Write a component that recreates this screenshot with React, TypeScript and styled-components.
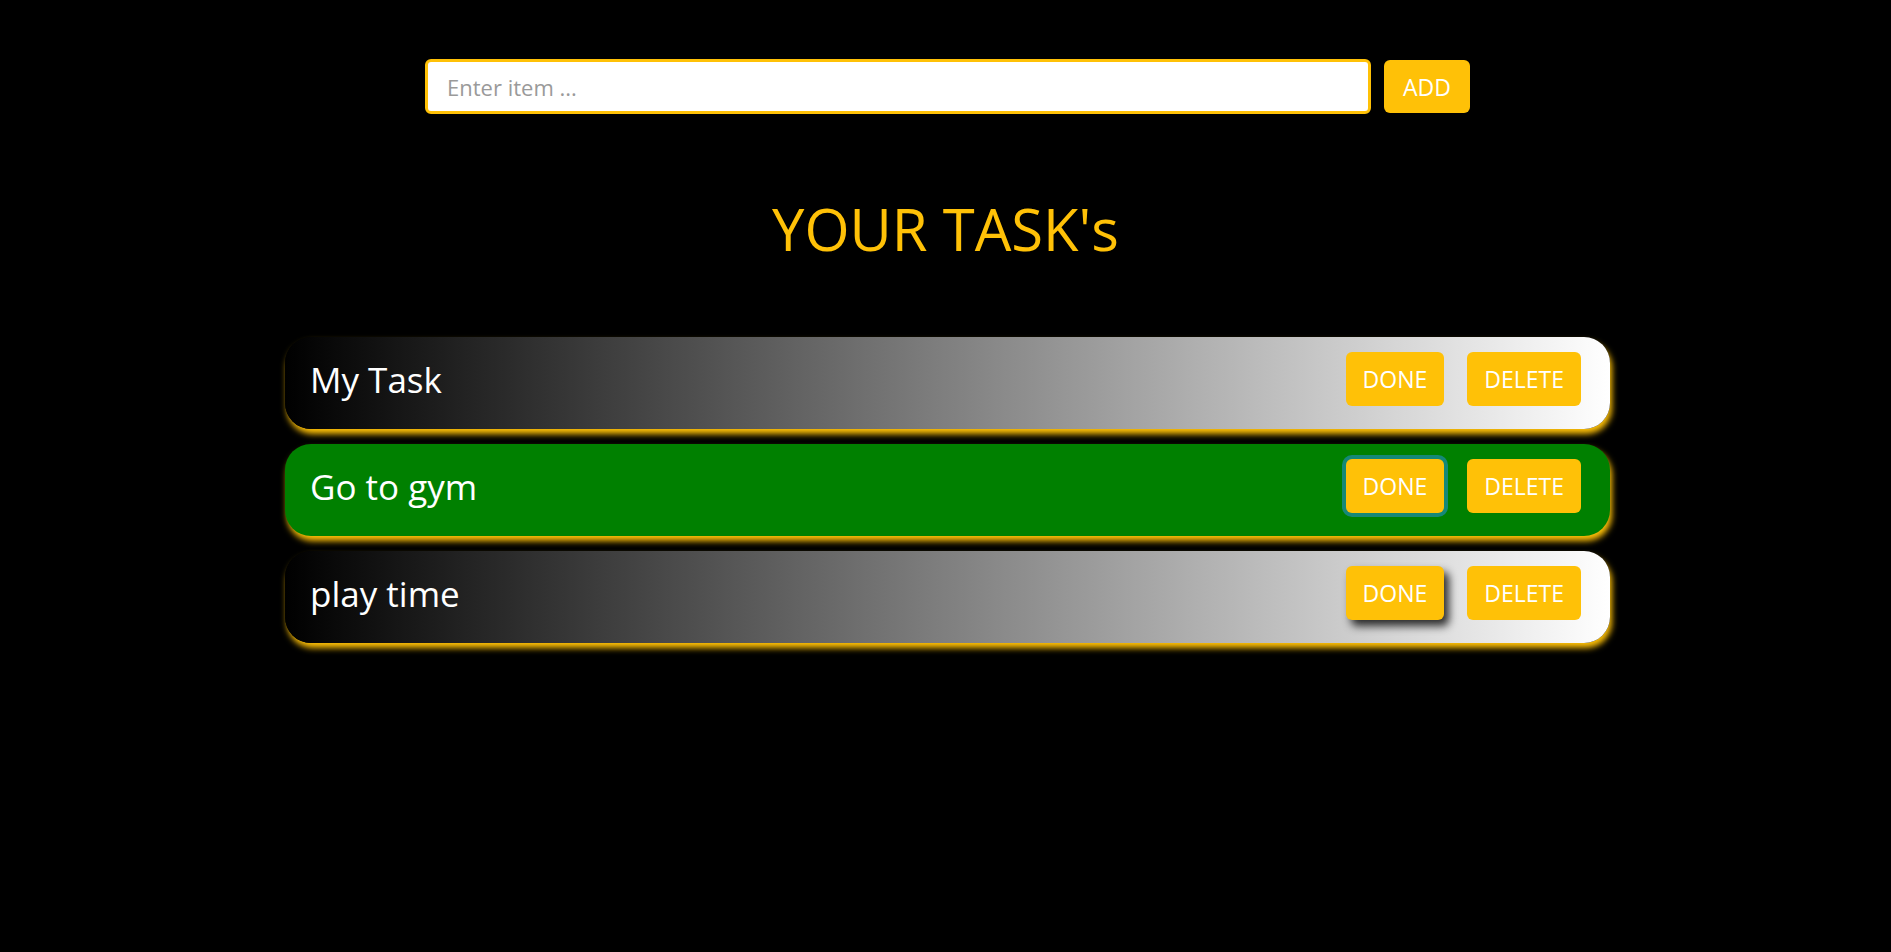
import React from "react";
import styled, { createGlobalStyle } from "styled-components";

const GlobalStyle = createGlobalStyle`
  html, body {
    margin: 0;
    padding: 0;
    background: #000;
    font-family: "Open Sans", "Noto Sans", sans-serif;
  }
  * { box-sizing: border-box; }
`;

const Page = styled.div`
  min-height: 952px;
  background: #000;
  display: flex;
  flex-direction: column;
  align-items: center;
  padding-top: 59px;
`;

const Form = styled.form`
  display: flex;
  align-items: center;
  gap: 13px;
  margin-left: 4px;
`;

const Input = styled.input`
  width: 946px;
  height: 55px;
  border: 3px solid #ffc107;
  border-radius: 6px;
  background: #fff;
  padding: 0 19px;
  font-family: inherit;
  font-size: 22px;
  color: #333;
  outline: none;
  &::placeholder {
    color: #9a9a9a;
  }
`;

const YellowButton = styled.button<{ $focus?: boolean; $hover?: boolean }>`
  height: 54px;
  padding: 0 17px;
  border: none;
  border-radius: 6px;
  background: #ffc107;
  color: #fff;
  font-family: inherit;
  font-size: 23px;
  cursor: pointer;
  box-shadow: ${(p) =>
    p.$focus
      ? "0 0 0 4px #158877"
      : p.$hover
      ? "5px 6px 9px rgba(0,0,0,0.8)"
      : "none"};
`;

const AddButton = styled(YellowButton)`
  height: 53px;
  padding: 0 19px;
`;

const Title = styled.h1`
  margin: 75px 0 0;
  color: #ffc107;
  font-weight: 400;
  font-size: 58px;
  line-height: 80px;
  text-align: center;
`;

const List = styled.div`
  margin-top: 68px;
  margin-left: 4px;
  width: 1325px;
  display: flex;
  flex-direction: column;
  gap: 15px;
`;

const Row = styled.div<{ $done?: boolean }>`
  height: 92px;
  border-radius: 26px;
  background: ${(p) =>
    p.$done ? "#008000" : "linear-gradient(to right, #000, #fff)"};
  box-shadow: 2px 5px 6px #ffc107;
  display: flex;
  align-items: center;
  padding: 0 29px 8px 25px;
`;

const TaskText = styled.span`
  flex: 1;
  color: #fff;
  font-size: 35px;
`;

const Actions = styled.div`
  display: flex;
  gap: 23px;
`;

const tasks = [
  { text: "My Task", done: false, focus: false, hover: false },
  { text: "Go to gym", done: true, focus: true, hover: false },
  { text: "play time", done: false, focus: false, hover: true },
];

export default function App() {
  return (
    <>
      <GlobalStyle />
      <Page>
        <Form onSubmit={(e) => e.preventDefault()}>
          <Input placeholder="Enter item ..." />
          <AddButton type="submit">ADD</AddButton>
        </Form>
        <Title>YOUR TASK's</Title>
        <List>
          {tasks.map((t) => (
            <Row key={t.text} $done={t.done}>
              <TaskText>{t.text}</TaskText>
              <Actions>
                <YellowButton $focus={t.focus} $hover={t.hover}>
                  DONE
                </YellowButton>
                <YellowButton>DELETE</YellowButton>
              </Actions>
            </Row>
          ))}
        </List>
      </Page>
    </>
  );
}
